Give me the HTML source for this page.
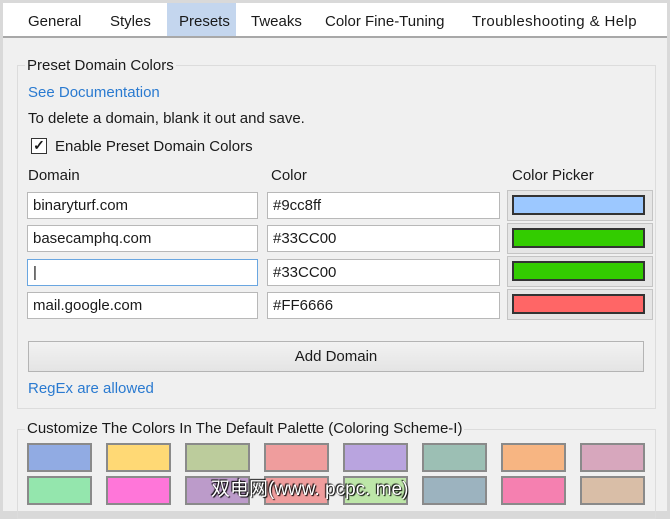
<!DOCTYPE html>
<html><head><style>
*{box-sizing:border-box;margin:0;padding:0}
body{width:670px;height:511px;background:#d9d9d9;font-family:"Segoe UI","Liberation Sans",sans-serif;font-size:15px;color:#1a1a1a;position:relative;overflow:hidden}
.win{position:absolute;left:3px;top:3px;width:664px;height:508px;background:#f0f0f0}
.tabs{position:absolute;left:0;top:0;width:664px;height:35px;background:#fff;border-bottom:2px solid #a8a8a8}
.tab{position:absolute;top:10px;font-size:15px}
.sel{position:absolute;left:164px;top:0;width:69px;height:33px;background:#c4d6ee}
.a{position:absolute;white-space:nowrap}
.fs{position:absolute;border:1px solid #dcdcdc}
.in{position:absolute;height:27px;background:#fff;border:1px solid #b8b8b8;padding:4px 5px;font-size:15px}
.pk{position:absolute;left:504px;width:146px;height:31px;border:1px solid #c4c4c4;background:#e5e5e5}
.pk div{position:absolute;left:4px;top:4px;width:133px;height:20px;border:2px solid #333}
.sw{position:absolute;width:65px;height:29px;border:2px solid #8a8a8a}
.link{color:#2a7ad0}
</style></head><body><div class="win">
<div class="tabs"><div class="sel"></div>
<span class="tab" style="left:25px">General</span>
<span class="tab" style="left:107px">Styles</span>
<span class="tab" style="left:176px">Presets</span>
<span class="tab" style="left:248px">Tweaks</span>
<span class="tab" style="left:322px">Color Fine-Tuning</span>
<span class="tab" style="left:469px;letter-spacing:0.4px">Troubleshooting &amp; Help</span>
</div>
<div class="fs" style="left:14px;top:62px;width:639px;height:344px"></div>
<div class="a" style="left:22px;top:54px;background:#f0f0f0;padding:0 2px">Preset Domain Colors</div>
<div class="a link" style="left:25px;top:81px">See Documentation</div>
<div class="a" style="left:25px;top:107px">To delete a domain, blank it out and save.</div>
<div class="a" style="left:28px;top:135px;width:16px;height:16px;border:1px solid #333;background:#fff;font-size:14px;line-height:13px;text-align:center;font-weight:bold">✓</div>
<div class="a" style="left:52px;top:135px">Enable Preset Domain Colors</div>
<div class="a" style="left:25px;top:164px">Domain</div>
<div class="a" style="left:268px;top:164px">Color</div>
<div class="a" style="left:509px;top:164px">Color Picker</div>

<div class="in" style="left:24px;top:189px;width:231px">binaryturf.com</div>
<div class="in" style="left:264px;top:189px;width:233px">#9cc8ff</div>
<div class="pk" style="top:187px"><div style="background:#9cc8ff"></div></div>

<div class="in" style="left:24px;top:222px;width:231px">basecamphq.com</div>
<div class="in" style="left:264px;top:222px;width:233px">#33CC00</div>
<div class="pk" style="top:220px"><div style="background:#33cc00"></div></div>

<div class="in" style="left:24px;top:256px;width:231px;border-color:#6aa6e0">|</div>
<div class="in" style="left:264px;top:256px;width:233px">#33CC00</div>
<div class="pk" style="top:253px"><div style="background:#33cc00"></div></div>

<div class="in" style="left:24px;top:289px;width:231px">mail.google.com</div>
<div class="in" style="left:264px;top:289px;width:233px">#FF6666</div>
<div class="pk" style="top:286px"><div style="background:#ff6666"></div></div>

<div class="a" style="left:25px;top:338px;width:616px;height:31px;border:1px solid #b4b4b4;background:linear-gradient(#f2f2f2,#e4e4e4);text-align:center;line-height:29px">Add Domain</div>
<div class="a link" style="left:25px;top:377px">RegEx are allowed</div>

<div class="fs" style="left:14px;top:426px;width:639px;height:90px"></div>
<div class="a" style="left:22px;top:417px;background:#f0f0f0;padding:0 2px">Customize The Colors In The Default Palette (Coloring Scheme-I)</div>

<div class="sw" style="left:24px;top:440px;background:#91abe3"></div>
<div class="sw" style="left:103px;top:440px;background:#ffd975"></div>
<div class="sw" style="left:182px;top:440px;background:#bccc9c"></div>
<div class="sw" style="left:261px;top:440px;background:#ef9d9d"></div>
<div class="sw" style="left:340px;top:440px;background:#b9a4df"></div>
<div class="sw" style="left:419px;top:440px;background:#9cbfb4"></div>
<div class="sw" style="left:498px;top:440px;background:#f7b582"></div>
<div class="sw" style="left:577px;top:440px;background:#d7a7bd"></div>

<div class="sw" style="left:24px;top:473px;background:#94e6ad"></div>
<div class="sw" style="left:103px;top:473px;background:#ff76d9"></div>
<div class="sw" style="left:182px;top:473px;background:#bc9bca"></div>
<div class="sw" style="left:261px;top:473px;background:#ef9d9d"></div>
<div class="sw" style="left:340px;top:473px;background:#bde6a8"></div>
<div class="sw" style="left:419px;top:473px;background:#9cb3bf"></div>
<div class="sw" style="left:498px;top:473px;background:#f580b0"></div>
<div class="sw" style="left:577px;top:473px;background:#d9bea7"></div>
<div class="a" style="left:208px;top:471px;color:#fff;font-size:19px;font-family:'Liberation Sans','Noto Sans CJK SC',sans-serif;text-shadow:1px 1px 1px #000,-1px -1px 1px #000">双电网(www. pcpc. me)</div>
</div></body></html>
